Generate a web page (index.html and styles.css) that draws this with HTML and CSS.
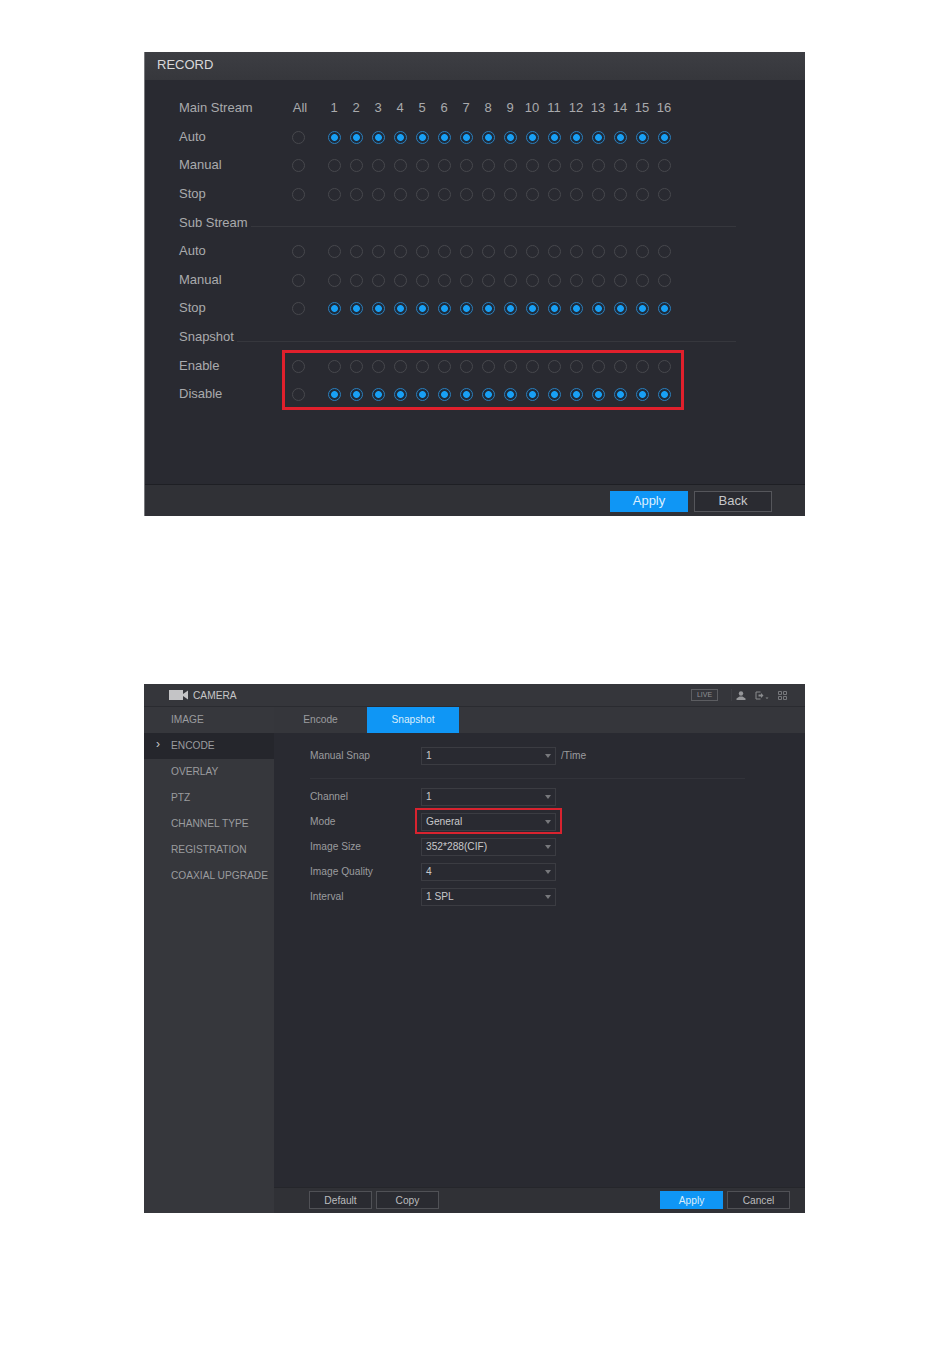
FILE: index.html
```html
<!DOCTYPE html>
<html lang="en">
<head>
    <meta charset="UTF-8">
    <meta name="viewport" content="width=device-width, initial-scale=1.0">
    <title>Record and Snapshot Settings</title>
    <link rel="stylesheet" href="styles.css">
</head>
<body>
    <!-- Record panel -->
    <div class="record">
        <div class="record-title">RECORD</div>
        <div class="record-body">
            <div class="row">
                <span class="row-label">Main Stream</span>
                <span class="all all-text">All</span>
                <span class="cells cells-text">
                    <span>1</span><span>2</span><span>3</span><span>4</span><span>5</span><span>6</span><span>7</span><span>8</span><span>9</span><span>10</span><span>11</span><span>12</span><span>13</span><span>14</span><span>15</span><span>16</span>
                </span>
            </div>
            <div class="row">
                <span class="row-label">Auto</span>
                <span class="all"><i class="radio"></i></span>
                <span class="cells">
                    <i class="radio on"></i><i class="radio on"></i><i class="radio on"></i><i class="radio on"></i><i class="radio on"></i><i class="radio on"></i><i class="radio on"></i><i class="radio on"></i><i class="radio on"></i><i class="radio on"></i><i class="radio on"></i><i class="radio on"></i><i class="radio on"></i><i class="radio on"></i><i class="radio on"></i><i class="radio on"></i>
                </span>
            </div>
            <div class="row">
                <span class="row-label">Manual</span>
                <span class="all"><i class="radio"></i></span>
                <span class="cells">
                    <i class="radio"></i><i class="radio"></i><i class="radio"></i><i class="radio"></i><i class="radio"></i><i class="radio"></i><i class="radio"></i><i class="radio"></i><i class="radio"></i><i class="radio"></i><i class="radio"></i><i class="radio"></i><i class="radio"></i><i class="radio"></i><i class="radio"></i><i class="radio"></i>
                </span>
            </div>
            <div class="row">
                <span class="row-label">Stop</span>
                <span class="all"><i class="radio"></i></span>
                <span class="cells">
                    <i class="radio"></i><i class="radio"></i><i class="radio"></i><i class="radio"></i><i class="radio"></i><i class="radio"></i><i class="radio"></i><i class="radio"></i><i class="radio"></i><i class="radio"></i><i class="radio"></i><i class="radio"></i><i class="radio"></i><i class="radio"></i><i class="radio"></i><i class="radio"></i>
                </span>
            </div>
            <div class="row section"><span>Sub Stream</span><b></b></div>
            <div class="row">
                <span class="row-label">Auto</span>
                <span class="all"><i class="radio"></i></span>
                <span class="cells">
                    <i class="radio"></i><i class="radio"></i><i class="radio"></i><i class="radio"></i><i class="radio"></i><i class="radio"></i><i class="radio"></i><i class="radio"></i><i class="radio"></i><i class="radio"></i><i class="radio"></i><i class="radio"></i><i class="radio"></i><i class="radio"></i><i class="radio"></i><i class="radio"></i>
                </span>
            </div>
            <div class="row">
                <span class="row-label">Manual</span>
                <span class="all"><i class="radio"></i></span>
                <span class="cells">
                    <i class="radio"></i><i class="radio"></i><i class="radio"></i><i class="radio"></i><i class="radio"></i><i class="radio"></i><i class="radio"></i><i class="radio"></i><i class="radio"></i><i class="radio"></i><i class="radio"></i><i class="radio"></i><i class="radio"></i><i class="radio"></i><i class="radio"></i><i class="radio"></i>
                </span>
            </div>
            <div class="row">
                <span class="row-label">Stop</span>
                <span class="all"><i class="radio"></i></span>
                <span class="cells">
                    <i class="radio on"></i><i class="radio on"></i><i class="radio on"></i><i class="radio on"></i><i class="radio on"></i><i class="radio on"></i><i class="radio on"></i><i class="radio on"></i><i class="radio on"></i><i class="radio on"></i><i class="radio on"></i><i class="radio on"></i><i class="radio on"></i><i class="radio on"></i><i class="radio on"></i><i class="radio on"></i>
                </span>
            </div>
            <div class="row section"><span>Snapshot</span><b></b></div>
            <div class="row">
                <span class="row-label">Enable</span>
                <span class="all"><i class="radio"></i></span>
                <span class="cells">
                    <i class="radio"></i><i class="radio"></i><i class="radio"></i><i class="radio"></i><i class="radio"></i><i class="radio"></i><i class="radio"></i><i class="radio"></i><i class="radio"></i><i class="radio"></i><i class="radio"></i><i class="radio"></i><i class="radio"></i><i class="radio"></i><i class="radio"></i><i class="radio"></i>
                </span>
            </div>
            <div class="row">
                <span class="row-label">Disable</span>
                <span class="all"><i class="radio"></i></span>
                <span class="cells">
                    <i class="radio on"></i><i class="radio on"></i><i class="radio on"></i><i class="radio on"></i><i class="radio on"></i><i class="radio on"></i><i class="radio on"></i><i class="radio on"></i><i class="radio on"></i><i class="radio on"></i><i class="radio on"></i><i class="radio on"></i><i class="radio on"></i><i class="radio on"></i><i class="radio on"></i><i class="radio on"></i>
                </span>
            </div>
            <div class="record-mark"></div>
        </div>
        <div class="record-foot">
            <button class="btn-big primary">Apply</button>
            <button class="btn-big">Back</button>
        </div>
    </div>

    <!-- Camera panel -->
    <div class="camera">
        <div class="camera-top">
            <svg class="cam-icon" width="19" height="10" viewBox="0 0 19 10">
                <rect x="0" y="0" width="14" height="10" fill="#c4c4c6"/>
                <path d="M14 4 L19 0.5 V9.5 L14 6 Z" fill="#c4c4c6"/>
            </svg>
            <span class="camera-name">CAMERA</span>
            <span class="live">LIVE</span>
            <span class="top-sep"></span>
            <div class="top-icons">
                <svg width="10" height="9" viewBox="0 0 10 9">
                    <circle cx="5" cy="2.5" r="2.2" fill="#96979a"/>
                    <path d="M0.5 9 V7.5 L3.5 5.5 H6.5 L9.5 7.5 V9 Z" fill="#96979a"/>
                </svg>
                <svg width="14" height="9" viewBox="0 0 14 9">
                    <path d="M5.5 1 H1 V8 H5.5" fill="none" stroke="#8a8b8e"/>
                    <path d="M3.5 3.6 H6 V2 L8.5 4.5 L6 7 V5.4 H3.5 Z" fill="#8a8b8e"/>
                    <path d="M10.5 6.5 H13.5 L12 8 Z" fill="#8a8b8e"/>
                </svg>
                <svg width="9" height="9" viewBox="0 0 9 9">
                    <path d="M0.5 0.5 H3.5 V3.5 H0.5 Z M5.5 0.5 H8.5 V3.5 H5.5 Z M0.5 5.5 H3.5 V8.5 H0.5 Z M5.5 5.5 H8.5 V8.5 H5.5 Z" fill="none" stroke="#77787c"/>
                </svg>
            </div>
        </div>
        <div class="camera-main">
            <ul class="side">
                <li>IMAGE</li>
                <li class="current">ENCODE</li>
                <li>OVERLAY</li>
                <li>PTZ</li>
                <li>CHANNEL TYPE</li>
                <li>REGISTRATION</li>
                <li>COAXIAL UPGRADE</li>
            </ul>
            <div class="content">
                <div class="tabs">
                    <div class="tab">Encode</div>
                    <div class="tab active">Snapshot</div>
                </div>
                <div class="form">
                    <div class="field">
                        <label>Manual Snap</label>
                        <div class="select">1</div>
                        <span class="unit">/Time</span>
                    </div>
                    <div class="form-line"></div>
                    <div class="field">
                        <label>Channel</label>
                        <div class="select">1</div>
                    </div>
                    <div class="field">
                        <label>Mode</label>
                        <div class="select marked">General</div>
                    </div>
                    <div class="field">
                        <label>Image Size</label>
                        <div class="select">352*288(CIF)</div>
                    </div>
                    <div class="field">
                        <label>Image Quality</label>
                        <div class="select">4</div>
                    </div>
                    <div class="field">
                        <label>Interval</label>
                        <div class="select">1 SPL</div>
                    </div>
                </div>
                <div class="camera-foot">
                    <button class="btn">Default</button>
                    <button class="btn">Copy</button>
                    <span class="foot-space"></span>
                    <button class="btn primary">Apply</button>
                    <button class="btn">Cancel</button>
                </div>
            </div>
        </div>
    </div>
</body>
</html>
```
FILE: styles.css
```css
body {
    margin: 0;
    padding: 52px 0 0 144px;
    background-color: white;
    font-family: "Liberation Sans", Arial, sans-serif;
    height: 1308px;
    overflow: hidden;
}

button {
    font-family: inherit;
    cursor: pointer;
}

/* Record panel */
.record {
    width: 661px;
    height: 464px;
    display: flex;
    flex-direction: column;
    background-color: #292a31;
    color: #a9aaad;
    box-sizing: border-box;
    border-left: 1px solid #77787c;
}

.record-title {
    height: 28px;
    line-height: 25px;
    padding-left: 12px;
    font-size: 13px;
    color: #d8d8da;
    background: linear-gradient(#3d3e43, #36373c);
}

.record-body {
    position: relative;
    flex: 1;
    padding: 14px 0 0 34px;
}

.row {
    display: flex;
    align-items: center;
    height: 28.6px;
    font-size: 13px;
}

.row-label {
    width: 108px;
    margin-top: -1px;
}

.all {
    width: 22px;
    display: flex;
    justify-content: center;
    margin-right: 14px;
}

.all-text {
    padding-left: 4px;
    box-sizing: border-box;
    margin-top: -1px;
}

.cells {
    display: flex;
    width: 352px;
}

.cells-text {
    margin-top: -1px;
}

.cells span {
    width: 22px;
    text-align: center;
}

.radio {
    display: block;
    width: 13px;
    height: 13px;
    box-sizing: border-box;
    border: 1px solid #47484d;
    border-radius: 50%;
    margin: 1px auto 0;
}

.cells .radio {
    margin: 1px 4.5px 0;
}

.radio.on {
    border-color: #2a7fbd;
    background: radial-gradient(circle, #18a0f5 0 3px, #1f2a38 3.8px);
}

.section {
    width: 557px;
}

.section span {
    margin-top: -1px;
}

.section b {
    flex: 1;
    height: 1px;
    margin: 8px 0 0 3px;
    background-color: #36373d;
}

.record-mark {
    position: absolute;
    left: 137px;
    top: 270px;
    width: 402px;
    height: 60px;
    box-sizing: border-box;
    border: 3px solid #e0202c;
}

.record-foot {
    height: 32px;
    box-sizing: border-box;
    display: flex;
    justify-content: flex-end;
    align-items: center;
    gap: 6px;
    padding: 1px 33px 0 0;
    background-color: #303136;
    border-top: 1px solid #1e1f24;
}

.btn-big {
    width: 78px;
    height: 21px;
    padding: 0 0 2px;
    font-size: 13px;
    color: #c6c7c9;
    background-color: #2a2b31;
    border: 1px solid #55565b;
}

.btn-big.primary {
    color: #dcefff;
    background-color: #0f96f5;
    border-color: #0f96f5;
}

/* Camera panel */
.camera {
    width: 661px;
    height: 529px;
    margin-top: 168px;
    display: flex;
    flex-direction: column;
    background-color: #292a31;
    color: #9b9c9f;
}

.camera-top {
    height: 23px;
    flex: none;
    box-sizing: border-box;
    display: flex;
    align-items: center;
    padding: 0 18px 0 25px;
    font-size: 10.2px;
    background-color: #35363b;
    border-bottom: 1px solid #2a2b30;
}

.cam-icon {
    margin-right: 5px;
}

.camera-name {
    flex: 1;
    color: #c6c6c8;
}

.live {
    width: 27px;
    height: 12px;
    box-sizing: border-box;
    border: 1px solid #5c5d61;
    font-size: 7px;
    line-height: 10px;
    text-align: center;
    color: #8f9093;
}

.top-sep {
    width: 1px;
    height: 12px;
    margin-left: 13px;
    background-color: #3e3f44;
}

.top-icons {
    display: flex;
    gap: 9px;
    margin-left: 4px;
}

.camera-main {
    flex: 1;
    display: flex;
    min-height: 0;
}

.side {
    width: 130px;
    flex: none;
    margin: 0;
    padding: 0;
    list-style: none;
    font-size: 10.2px;
    background-color: #36373c;
}

.side li {
    position: relative;
    height: 26px;
    line-height: 25px;
    padding-left: 27px;
    white-space: nowrap;
}

.side .current {
    background-color: #25262c;
}

.side .current::before {
    content: "\203A";
    position: absolute;
    left: 12px;
    top: -1px;
    font-size: 12px;
    color: #c8c8ca;
}

.content {
    flex: 1;
    display: flex;
    flex-direction: column;
    min-width: 0;
}

.tabs {
    height: 26px;
    flex: none;
    display: flex;
    background-color: #35363b;
}

.tab {
    width: 93px;
    line-height: 26px;
    text-align: center;
    font-size: 10.2px;
}

.tab.active {
    width: 92px;
    color: #d9edfb;
    background-color: #0f96f5;
}

.form {
    flex: 1;
    padding: 10px 0 0 36px;
}

.field {
    display: flex;
    align-items: center;
    height: 25px;
    font-size: 10.2px;
}

.field label {
    width: 111px;
}

.select {
    position: relative;
    width: 135px;
    height: 18px;
    box-sizing: border-box;
    padding-left: 4px;
    line-height: 16px;
    border: 1px solid #3b3c42;
    color: #c8c8ca;
}

.select::after {
    content: "";
    position: absolute;
    right: 4px;
    top: 6px;
    border-left: 3px solid transparent;
    border-right: 3px solid transparent;
    border-top: 4px solid #77787c;
}

.select.marked::before {
    content: "";
    position: absolute;
    left: -7px;
    top: -6px;
    width: 147px;
    height: 26px;
    box-sizing: border-box;
    border: 2px solid #d8232f;
}

.unit {
    margin-left: 5px;
}

.form-line {
    width: 435px;
    height: 1px;
    margin: 10px 0 5px;
    background-color: #32333a;
}

.camera-foot {
    height: 26px;
    flex: none;
    display: flex;
    align-items: center;
    gap: 4px;
    padding: 0 15px 1px 35px;
    background-color: #303136;
    border-top: 1px solid #25262b;
    box-sizing: border-box;
}

.foot-space {
    flex: 1;
}

.btn {
    width: 63px;
    height: 18px;
    padding: 0;
    font-size: 10.2px;
    color: #bbbcbe;
    background-color: #2a2b31;
    border: 1px solid #505156;
}

.btn.primary {
    color: #d9edfb;
    background-color: #0f96f5;
    border-color: #0f96f5;
}
```
